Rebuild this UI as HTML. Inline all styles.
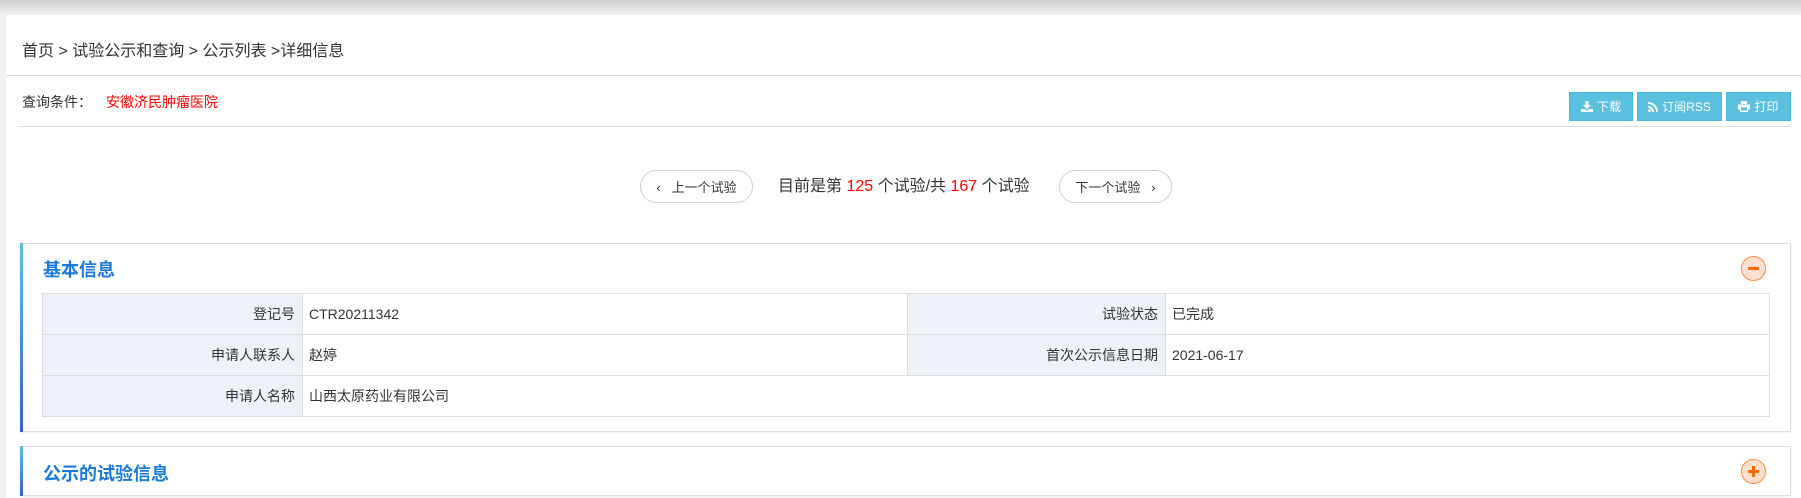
<!DOCTYPE html>
<html><head><meta charset="utf-8"><style>
*{margin:0;padding:0;box-sizing:border-box}
body{width:1801px;height:498px;overflow:hidden;background:#f2f2f2;font-family:"Liberation Sans","Noto Sans CJK SC",sans-serif;color:#333;position:relative}
.top{position:absolute;left:0;top:0;width:1801px;height:15px;background:linear-gradient(#cfcfcf,#f2f2f2)}
.main{position:absolute;left:6px;top:15px;right:0;bottom:0;background:#fff}
.abs{position:absolute}
.bc{left:16px;top:22px;font-size:16px;color:#333;white-space:nowrap}
.hr{height:1px;background:#dedede}
.q{left:16px;top:77px;font-size:14px}
.q span{color:#f00;margin-left:14px}
.btn{position:absolute;top:77px;height:29px;background:#5bc0de;border:1px solid #46b8da;color:#fff;font-size:12px;display:flex;align-items:center;justify-content:center;gap:4px}
.pg{position:absolute;top:155px;height:33px;border:1px solid #ccc;border-radius:17px;font-size:13px;color:#333;display:flex;align-items:center;justify-content:center;background:#fff}
.cur{position:absolute;left:772px;top:161px;font-size:16px;white-space:nowrap;line-height:22px}
.cur b{color:#f00;font-weight:normal}
.panel{position:absolute;left:14px;width:1771px;border:1px solid #ddd;border-left:none;background:#fff;box-shadow:0 1px 2px rgba(0,0,0,.08)}
.panel:before{content:"";position:absolute;left:0;top:-1px;bottom:-1px;width:3px;background:linear-gradient(#5bc0de,#3b5fcf)}
.ttl{position:absolute;left:23px;font-size:18px;font-weight:bold;color:#1a7ad9}
.ic{position:absolute;left:1721px;width:25px;height:25px;border-radius:50%;border:1px solid #ff8a3c;background:#fde0cf}
table{position:absolute;left:22px;top:49px;border-collapse:collapse;font-size:14px}
td{border:1px solid #ddd;height:41px;padding:0 6px}
td.l{background:#eef1f8;text-align:right;padding-right:7px}
</style></head><body>
<div class="top"></div>
<div class="main">
<div class="abs bc">首页&nbsp;&gt;&nbsp;试验公示和查询&nbsp;&gt;&nbsp;公示列表&nbsp;&gt;详细信息</div>
<div class="abs hr" style="left:0;right:0;top:60px"></div>
<div class="abs q">查询条件：<span>安徽济民肿瘤医院</span></div>
<div class="btn" style="left:1563px;width:64px"><svg width="12" height="11" viewBox="0 0 12 11"><path d="M4.5 0h3v4h2.5L6 8 2 4h2.5z M0 8h4l2 2 2-2h4v3H0z" fill="#fff"/></svg>下载</div>
<div class="btn" style="left:1631px;width:85px"><svg width="10" height="10" viewBox="0 0 10 10"><circle cx="1.5" cy="8.5" r="1.5" fill="#fff"/><path d="M0 4a6 6 0 0 1 6 6H4.3A4.3 4.3 0 0 0 0 5.7z M0 0a10 10 0 0 1 10 10H8.2A8.2 8.2 0 0 0 0 1.8z" fill="#fff"/></svg>订阅RSS</div>
<div class="btn" style="left:1720px;width:65px"><svg width="12" height="11" viewBox="0 0 12 11"><path d="M3 0h6v3H3z M0 3.5h12v5h-2v2.5H2V8.5H0z" fill="#fff"/><rect x="3" y="6.5" width="6" height="3" fill="#5bc0de"/></svg>打印</div>
<div class="abs hr" style="left:12px;width:1773px;top:111px"></div>
<div class="pg" style="left:634px;width:113px">‹&nbsp;&nbsp;&nbsp;上一个试验</div>
<div class="cur">目前是第 <b>125</b> 个试验/共 <b>167</b> 个试验</div>
<div class="pg" style="left:1053px;width:113px">下一个试验&nbsp;&nbsp;&nbsp;›</div>
<div class="panel" style="top:228px;height:189px">
<div class="ttl" style="top:12px">基本信息</div>
<div class="ic" style="top:12px"><div style="position:absolute;left:6px;top:10px;width:11px;height:3px;background:#ff6a00"></div></div>
<table>
<tr><td class="l" style="width:260px">登记号</td><td style="width:605px">CTR20211342</td><td class="l" style="width:258px">试验状态</td><td style="width:604px">已完成</td></tr>
<tr><td class="l">申请人联系人</td><td>赵婷</td><td class="l">首次公示信息日期</td><td>2021-06-17</td></tr>
<tr><td class="l">申请人名称</td><td colspan="3">山西太原药业有限公司</td></tr>
</table>
</div>
<div class="panel" style="top:431px;height:50px">
<div class="ttl" style="top:13px">公示的试验信息</div>
<div class="ic" style="top:12px"><div style="position:absolute;left:6px;top:10px;width:11px;height:3px;background:#ff6a00"></div><div style="position:absolute;left:10px;top:6px;width:3px;height:11px;background:#ff6a00"></div></div>
</div>
</div>
</body></html>
